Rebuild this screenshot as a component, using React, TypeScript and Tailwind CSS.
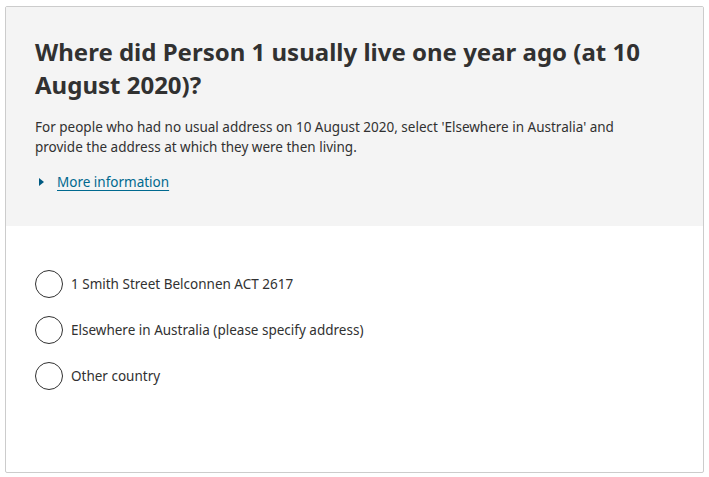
export default function App() {
  const options = [
    "1 Smith Street Belconnen ACT 2617",
    "Elsewhere in Australia (please specify address)",
    "Other country",
  ];
  return (
    <div className="w-[709px] h-[477px] bg-white pt-[6px] pl-[5px]" style={{ fontFamily: '"Noto Sans", sans-serif' }}>
      <div className="w-[699px] h-[467px] border border-[#cccccc] rounded-[2px] flex flex-col overflow-hidden">
        <div className="bg-[#f4f4f4] px-[29px] pt-[28px] pb-[34px]">
          <h1 className="text-[24px] leading-[33px] font-bold text-[#313131]">
            Where did Person 1 usually live one year ago (at 10 August 2020)?
          </h1>
          <p className="mt-[16px] text-[13.5px] leading-[20px] text-[#313131] pr-[40px]">
            For people who had no usual address on 10 August 2020, select 'Elsewhere in Australia' and provide the address at which they were then living.
          </p>
          <div className="mt-[15px] flex items-center gap-[13px] text-[13.5px] leading-[20px]">
            <svg width="5" height="8" viewBox="0 0 5 8" className="ml-[4px]">
              <path d="M0 0 L5 4 L0 8 Z" fill="#005a82" />
            </svg>
            <span className="text-[#00698f] underline underline-offset-[3px]">More information</span>
          </div>
        </div>
        <div className="px-[29px] pt-[44px] flex flex-col gap-[18px]">
          {options.map((o) => (
            <label key={o} className="flex items-center gap-[8px] text-[13.5px] text-[#313131]">
              <span className="w-[28px] h-[28px] rounded-full border border-[#313131] bg-white shrink-0" />
              {o}
            </label>
          ))}
        </div>
      </div>
    </div>
  );
}
